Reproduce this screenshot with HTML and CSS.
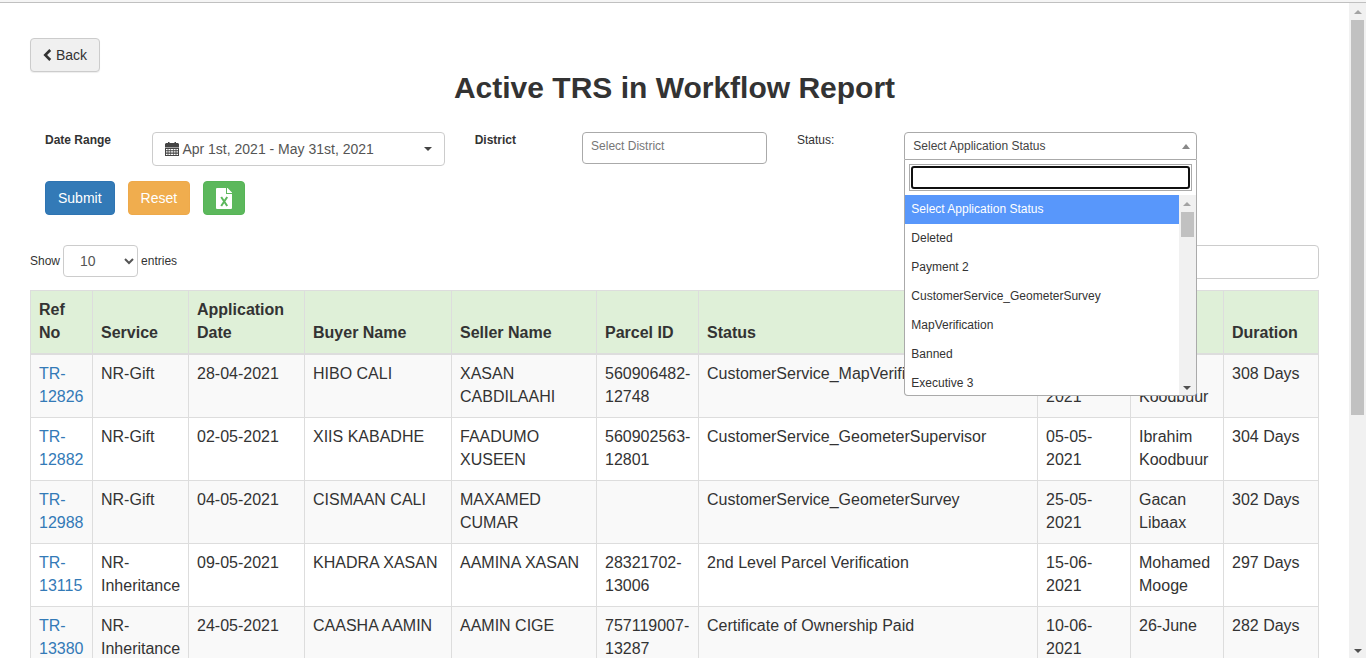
FILE: index.html
```html
<!DOCTYPE html>
<html lang="en">
<head>
<meta charset="utf-8">
<title>Active TRS in Workflow Report</title>
<link rel="stylesheet" href="styles.css">
</head>
<body>
<div class="window-edge"></div>
<div class="viewport">
<main class="page">
  <button type="button" class="btn btn-default">
    <svg class="icon-back" viewBox="0 0 9 12" aria-hidden="true"><path d="M6.3 0 8.2 1.9 4.1 6l4.1 4.1L6.3 12 .4 6z"/></svg>
    Back
  </button>
  <h1 class="title">Active TRS in Workflow Report</h1>

  <form class="filters">
    <label class="filter-label strong" for="range">Date Range</label>
    <div class="field wide">
      <button type="button" class="range" id="range">
        <svg class="icon-calendar" viewBox="0 0 14 15" aria-hidden="true">
          <path d="M1 1h2V0h1.500v1h5V0H11v1h2l1 1v3.500H0V2z"/>
          <path fill-rule="evenodd" d="M0 6h14v8H0zM1 7v1.300h1.600V7zM3.400 7v1.300h2V7zM6 7v1.300h2V7zM8.600 7v1.300h2V7zM11.400 7v1.300H13V7zM1 9.300v1.300h1.600V9.300zM3.400 9.300v1.300h2V9.300zM6 9.300v1.300h2V9.300zM8.600 9.300v1.300h2V9.300zM11.400 9.300v1.300H13V9.300zM1 11.700V13h1.600v-1.300zM3.400 11.700V13h2v-1.300zM6 11.700V13h2v-1.300zM8.600 11.700V13h2v-1.300zM11.400 11.700V13H13v-1.300z"/>
        </svg>
        <span class="range-text">Apr 1st, 2021 - May 31st, 2021</span>
        <span class="caret"></span>
      </button>
    </div>
    <label class="filter-label strong" for="district">District</label>
    <div class="field medium">
      <input class="district" id="district" type="text" placeholder="Select District">
    </div>
    <label class="filter-label" for="status">Status:</label>
    <div class="field wide">
      <div class="picker">
        <button type="button" class="picker-value" id="status" aria-haspopup="listbox" aria-expanded="true">
          <span>Select Application Status</span>
          <span class="caret-up"></span>
        </button>
        <div class="picker-menu">
          <div class="picker-search"><div class="picker-search-frame"><input type="text" aria-label="Status filter"></div></div>
          <div class="picker-body">
            <ul class="picker-list" role="listbox">
              <li class="active" role="option" aria-selected="true">Select Application Status</li>
              <li role="option">Deleted</li>
              <li role="option">Payment 2</li>
              <li role="option">CustomerService_GeometerSurvey</li>
              <li role="option">MapVerification</li>
              <li role="option">Banned</li>
              <li role="option">Executive 3</li>
            </ul>
            <div class="scrollbar">
              <span class="arrow up"></span>
              <span class="thumb thumb-short"></span>
              <span class="arrow down"></span>
            </div>
          </div>
        </div>
      </div>
    </div>
  </form>

  <div class="actions">
    <button type="button" class="btn btn-primary">Submit</button>
    <button type="button" class="btn btn-warning">Reset</button>
    <button type="button" class="btn btn-success" aria-label="Export to Excel">
      <svg class="icon-excel" viewBox="0 0 16 21" aria-hidden="true">
        <path fill="#fff" d="M1 0h9v6h6v14a1 1 0 0 1-1 1H1a1 1 0 0 1-1-1V1a1 1 0 0 1 1-1z"/>
        <path fill="#fff" d="M11 0h.6L16 4.400V5h-5z"/>
        <path fill="none" stroke="#5cb85c" stroke-width="2" d="M5.200 9l6 9M11.200 9l-6 9"/>
      </svg>
    </button>
  </div>

  <div class="table-tools">
    <label class="length">Show
      <select class="length-select"><option>10</option><option>25</option></select>
      entries
    </label>
    <input class="search" type="search" aria-label="Search">
  </div>

  <table class="report">
    <colgroup>
      <col class="c-ref"><col class="c-service"><col class="c-date"><col class="c-buyer"><col class="c-seller">
      <col class="c-parcel"><col><col class="c-small"><col class="c-small"><col class="c-duration">
    </colgroup>
    <thead>
      <tr><th>Ref No</th><th>Service</th><th>Application Date</th><th>Buyer Name</th><th>Seller Name</th><th>Parcel ID</th><th>Status</th><th>Date</th><th>User</th><th>Duration</th></tr>
    </thead>
    <tbody>
      <tr><td><a href="#">TR-12826</a></td><td>NR-Gift</td><td>28-04-2021</td><td>HIBO CALI</td><td>XASAN CABDILAAHI</td><td>560906482-12748</td><td>CustomerService_MapVerification</td><td>05-05-2021</td><td>Ibrahim Koodbuur</td><td>308 Days</td></tr>
      <tr><td><a href="#">TR-12882</a></td><td>NR-Gift</td><td>02-05-2021</td><td>XIIS KABADHE</td><td>FAADUMO XUSEEN</td><td>560902563-12801</td><td>CustomerService_GeometerSupervisor</td><td>05-05-2021</td><td>Ibrahim Koodbuur</td><td>304 Days</td></tr>
      <tr><td><a href="#">TR-12988</a></td><td>NR-Gift</td><td>04-05-2021</td><td>CISMAAN CALI</td><td>MAXAMED CUMAR</td><td></td><td>CustomerService_GeometerSurvey</td><td>25-05-2021</td><td>Gacan Libaax</td><td>302 Days</td></tr>
      <tr><td><a href="#">TR-13115</a></td><td>NR-Inheritance</td><td>09-05-2021</td><td>KHADRA XASAN</td><td>AAMINA XASAN</td><td>28321702-13006</td><td>2nd Level Parcel Verification</td><td>15-06-2021</td><td>Mohamed Mooge</td><td>297 Days</td></tr>
      <tr><td><a href="#">TR-13380</a></td><td>NR-Inheritance</td><td>24-05-2021</td><td>CAASHA AAMIN</td><td>AAMIN CIGE</td><td>757119007-13287</td><td>Certificate of Ownership Paid</td><td>10-06-2021</td><td>26-June</td><td>282 Days</td></tr>
    </tbody>
  </table>
</main>
<div class="scrollbar">
  <span class="arrow up"></span>
  <span class="thumb thumb-page"></span>
  <span class="arrow down"></span>
</div>
</div>
</body>
</html>
```
FILE: styles.css
```css
* { box-sizing: border-box; }

body {
  margin: 0;
  height: 100vh;
  display: flex;
  flex-direction: column;
  overflow: hidden;
  background: #fff;
  color: #333;
  font: 12px/17px "Liberation Sans", Arial, sans-serif;
}

button, input, select { font-family: inherit; }

.window-edge {
  flex: none;
  height: 3px;
  background: #f5f5f5;
  border-bottom: 1px solid #c0c0c0;
}

.viewport { flex: 1; min-height: 0; display: flex; }

.page {
  flex: 1;
  min-width: 0;
  overflow: hidden;
  padding: 35px 30px 0;
}

/* Buttons */
.btn {
  display: inline-flex;
  align-items: center;
  height: 34px;
  padding: 0 12px;
  border: 1px solid transparent;
  border-radius: 4px;
  color: #fff;
  font-size: 14px;
  line-height: 20px;
}
.btn-default { display: flex; gap: 4px; background: #f0f0f0; border-color: #ccc; color: #333; box-shadow: 0 1px 1px #eee; }
.btn-primary { background: #337ab7; border-color: #2e74b2; }
.btn-warning { background: #f0ad4e; border-color: #eea94a; }
.btn-success { background: #5cb85c; border-color: #56b456; }
.icon-back { width: 9px; height: 12px; fill: #333; }
.icon-excel { width: 16px; height: 21px; }

.title {
  margin: 0 0 28px;
  text-align: center;
  font-size: 30px;
  line-height: 32px;
}

/* Filters on a twelve column grid */
.filters { display: grid; grid-template-columns: repeat(12, minmax(0, 1fr)); }
.filter-label { padding-left: 15px; height: 17px; }
.strong { font-weight: bold; }
.field { padding: 0 15px; }
.wide { grid-column: span 3; }
.medium { grid-column: span 2; }

.range {
  display: flex;
  align-items: center;
  gap: 3px;
  width: 100%;
  height: 34px;
  padding: 0 12px;
  border: 1px solid #ccc;
  border-radius: 4px;
  background: #fff;
  color: #555;
  font-size: 14px;
  text-align: left;
}
.range-text { flex: 1; white-space: nowrap; }
.icon-calendar { flex: none; width: 14px; height: 15px; fill: #444; }
.caret { border: 4px solid transparent; border-top-color: #444; border-bottom: 0; }

.district {
  display: block;
  width: 100%;
  height: 32px;
  padding: 0 8px 4px;
  border: 1px solid #aaa;
  border-radius: 4px;
  color: #444;
  font-size: 12px;
}
.district::placeholder { color: #777; }

.picker { position: relative; }
.picker-value {
  display: flex;
  align-items: center;
  justify-content: space-between;
  width: 100%;
  height: 28px;
  padding: 0 6px 0 8px;
  border: 1px solid #aaa;
  border-radius: 4px 4px 0 0;
  background: #fff;
  color: #444;
  font-size: 12px;
}
.caret-up { border: 4px solid transparent; border-bottom: 5px solid #888; border-top: 0; }
.picker-menu {
  position: absolute;
  z-index: 2;
  top: 100%;
  left: 0;
  width: 100%;
  border: 1px solid #aaa;
  border-top: 0;
  border-radius: 0 0 4px 4px;
  background: #fff;
  overflow: hidden;
}
.picker-search { padding: 4px; }
.picker-search-frame { padding: 1px; border: 1px solid #aaa; }
.picker-search input {
  display: block;
  width: 100%;
  height: 23px;
  border: 2px solid #101010;
  border-radius: 3px;
  outline: 0;
}
.picker-body { display: flex; height: 200px; overflow: hidden; }
.picker-list { flex: 1; margin: 0; padding: 0; list-style: none; }
.picker-list li { padding: 6px; line-height: 17px; }
.picker-list .active { background: #5897fb; color: #fff; }

/* Scrollbars */
.scrollbar {
  flex: none;
  display: flex;
  flex-direction: column;
  align-items: center;
  width: 17px;
  padding: 7px 0 5px;
  background: #f1f1f1;
}
.arrow { border: 4px solid transparent; }
.up { border-top: 0; border-bottom-color: #a3a3a3; }
.down { border-bottom: 0; border-top-color: #505050; margin-top: auto; }
.thumb { width: 13px; margin-top: 6px; background: #c1c1c1; }
.thumb-short { height: 25px; }
.thumb-page { height: 60vh; }

.actions { display: flex; gap: 13px; padding: 15px 15px 30px; }

.table-tools { display: flex; justify-content: space-between; height: 34px; margin-bottom: 11px; }
.length { display: flex; align-items: center; gap: 3px; height: 32px; }
.length-select {
  width: 75px;
  height: 32px;
  padding: 0 0 0 12px;
  border: 1px solid #ccc;
  border-radius: 4px;
  background: #fff;
  color: #555;
  font-size: 14px;
}
.search {
  width: 160px;
  height: 34px;
  border: 1px solid #ccc;
  border-radius: 4px;
}

/* Report table */
.report {
  width: 100%;
  table-layout: fixed;
  border-collapse: collapse;
  font-size: 16px;
  line-height: 23px;
}
.report th, .report td { padding: 7px 8px 9px; border: 1px solid #ddd; text-align: left; vertical-align: top; }
.report th { border-bottom-width: 2px; background: #dff0d8; vertical-align: bottom; }
.report tbody tr:nth-child(odd) { background: #f9f9f9; }
.report a { color: #337ab7; text-decoration: none; }
.c-ref { width: 62px; }
.c-service { width: 96px; }
.c-date { width: 116px; }
.c-buyer { width: 147px; }
.c-seller { width: 145px; }
.c-parcel { width: 102px; }
.c-small { width: 93px; }
.c-duration { width: 95px; }
```
